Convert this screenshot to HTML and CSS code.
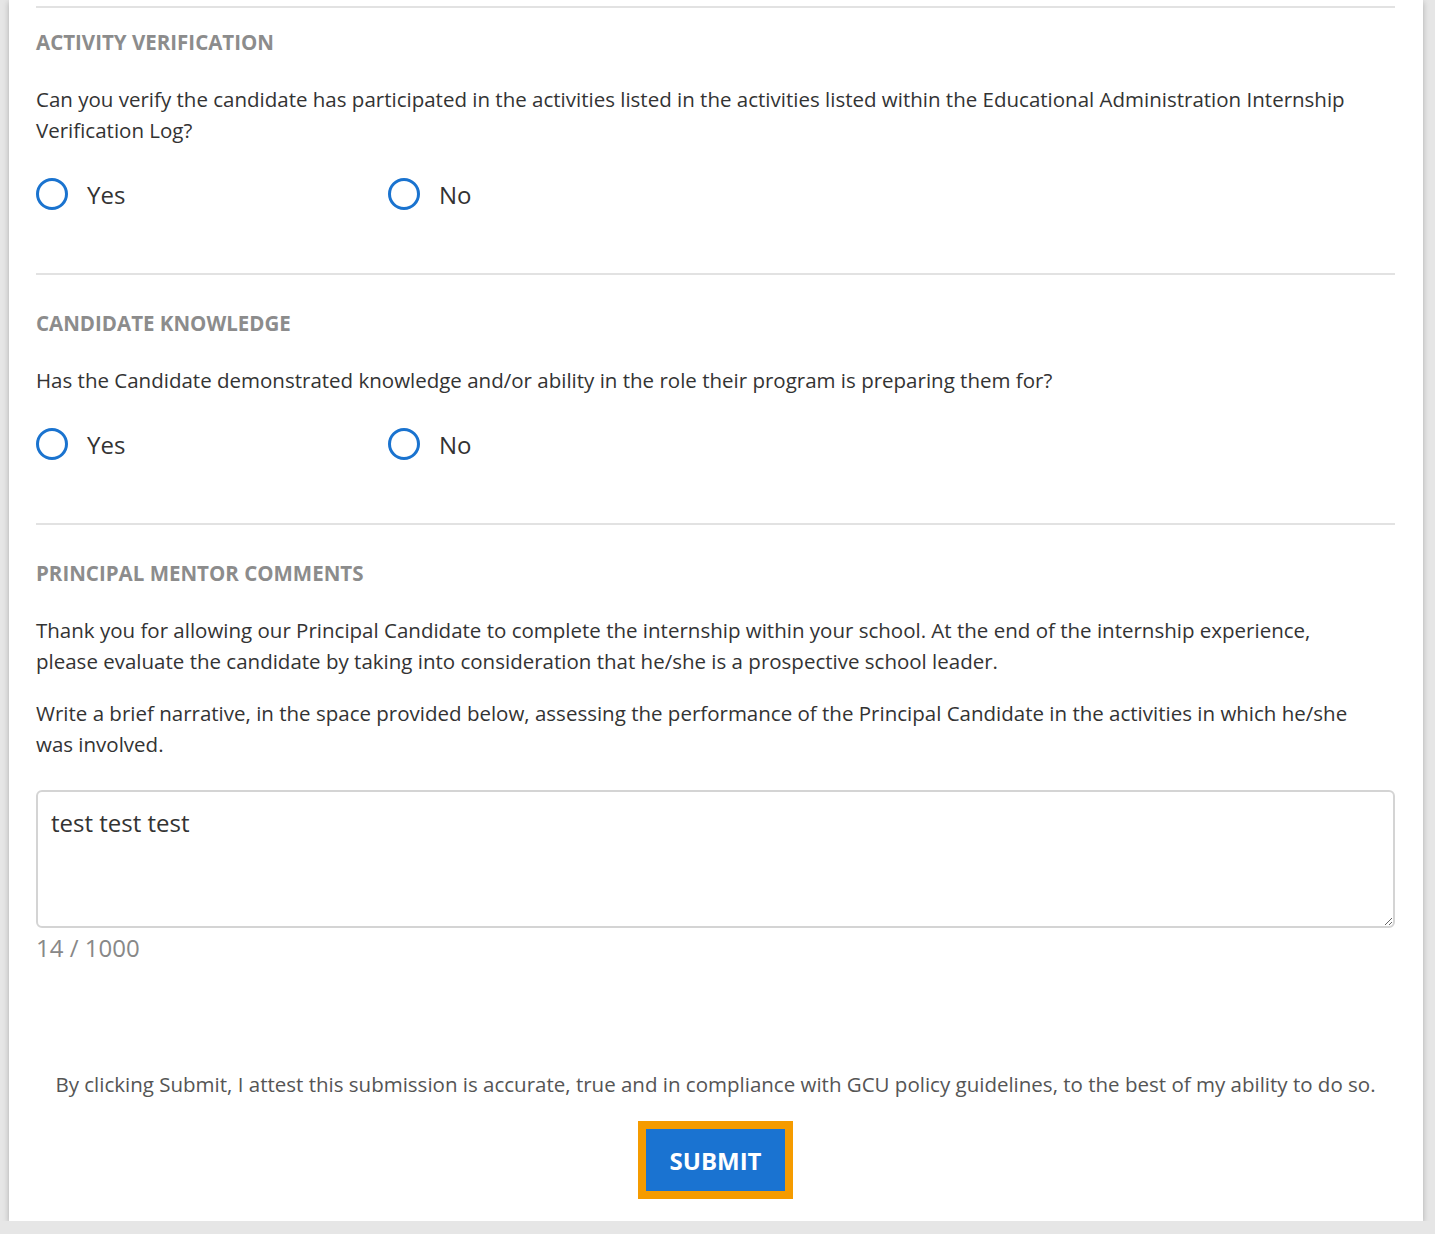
FILE: index.html
```html
<!DOCTYPE html>
<html lang="en">
<head>
    <meta charset="UTF-8">
    <meta name="viewport" content="width=device-width, initial-scale=1.0">
    <title>Principal Mentor Evaluation</title>
    <link rel="stylesheet" href="styles.css">
</head>
<body>

    <div class="card">

        <!-- Activity verification -->
        <div class="section first">
            <h2 class="section-title">ACTIVITY VERIFICATION</h2>
            <p class="question">Can you verify the candidate has participated in the activities listed in the activities listed within the Educational Administration Internship Verification Log?</p>
            <div class="radio-row">
                <label class="radio"><input type="radio" name="activity"><span class="circle"></span>Yes</label>
                <label class="radio"><input type="radio" name="activity"><span class="circle"></span>No</label>
            </div>
        </div>

        <!-- Candidate knowledge -->
        <div class="section">
            <h2 class="section-title">CANDIDATE KNOWLEDGE</h2>
            <p class="question">Has the Candidate demonstrated knowledge and/or ability in the role their program is preparing them for?</p>
            <div class="radio-row">
                <label class="radio"><input type="radio" name="knowledge"><span class="circle"></span>Yes</label>
                <label class="radio"><input type="radio" name="knowledge"><span class="circle"></span>No</label>
            </div>
        </div>

        <!-- Comments -->
        <div class="section">
            <h2 class="section-title">PRINCIPAL MENTOR COMMENTS</h2>
            <p class="question">Thank you for allowing our Principal Candidate to complete the internship within your school. At the end of the internship experience, please evaluate the candidate by taking into consideration that he/she is a prospective school leader.</p>
            <p class="question tight">Write a brief narrative, in the space provided below, assessing the performance of the Principal Candidate in the activities in which he/she was involved.</p>
            <textarea class="comments" id="comments" maxlength="1000" oninput="updateCount()">test test test</textarea>
            <div class="counter" id="counter">14 / 1000</div>
        </div>

        <div class="footer">
            <p class="attest">By clicking Submit, I attest this submission is accurate, true and in compliance with GCU policy guidelines, to the best of my ability to do so.</p>
            <button class="submit">SUBMIT</button>
        </div>

    </div>

    <script>
        function updateCount() {
            let text = document.getElementById("comments").value;
            document.getElementById("counter").textContent = text.length + " / 1000";
        }
    </script>

</body>
</html>
```

FILE: styles.css
```css
body {
    margin: 0;
    background-color: #e6e6e6;
    font-family: "Open Sans", "Noto Sans", sans-serif;
    color: #333;
}

.card {
    width: 1414px;
    margin-left: 9px;
    background-color: #fff;
    box-shadow: 0 2px 6px rgba(0, 0, 0, 0.25);
    padding: 6px 28px 22px 27px;
    box-sizing: border-box;
}

/* Sections */
.section {
    border-top: 2px solid #e2e2e2;
    padding-top: 34px;
}
.section.first {
    padding-top: 20px;
}
.section-title {
    margin: 0 0 28px;
    font-size: 20.5px;
    font-weight: 700;
    color: #8c8c8c;
    line-height: 28px;
}
.question {
    margin: 0;
    max-width: 1340px;
    font-size: 20.5px;
    line-height: 31px;
    color: #333;
}
.question.tight {
    margin-top: 21px;
}

/* Radios */
.radio-row {
    display: flex;
    height: 34px;
    padding: 31px 0 62px;
}
.radio {
    display: flex;
    align-items: center;
    width: 352px;
    font-size: 24px;
    color: #333;
    cursor: pointer;
}
.radio input {
    display: none;
}
.circle {
    width: 32px;
    height: 32px;
    border: 3px solid #1a73cf;
    border-radius: 50%;
    box-sizing: border-box;
    margin-right: 19px;
}

/* Comments */
.comments {
    display: block;
    width: 100%;
    height: 138px;
    margin-top: 30px;
    padding: 14px 13px;
    box-sizing: border-box;
    border: 2px solid #d4d4d4;
    border-radius: 6px;
    font-family: inherit;
    font-size: 24px;
    color: #333;
    resize: vertical;
    outline: none;
}
.counter {
    font-size: 24px;
    line-height: 30px;
    color: #888;
    margin-top: 5px;
}

/* Footer */
.footer {
    text-align: center;
    margin-top: 106px;
}
.attest {
    margin: 0 0 21px;
    font-size: 20.5px;
    line-height: 31px;
    color: #555;
}
.submit {
    display: block;
    margin: 0 auto;
    background-color: #1a73d1;
    color: #fff;
    font-family: inherit;
    font-size: 24px;
    font-weight: 700;
    border: 8px solid #f59b00;
    padding: 0 24px;
    height: 78px;
    cursor: pointer;
}
```
